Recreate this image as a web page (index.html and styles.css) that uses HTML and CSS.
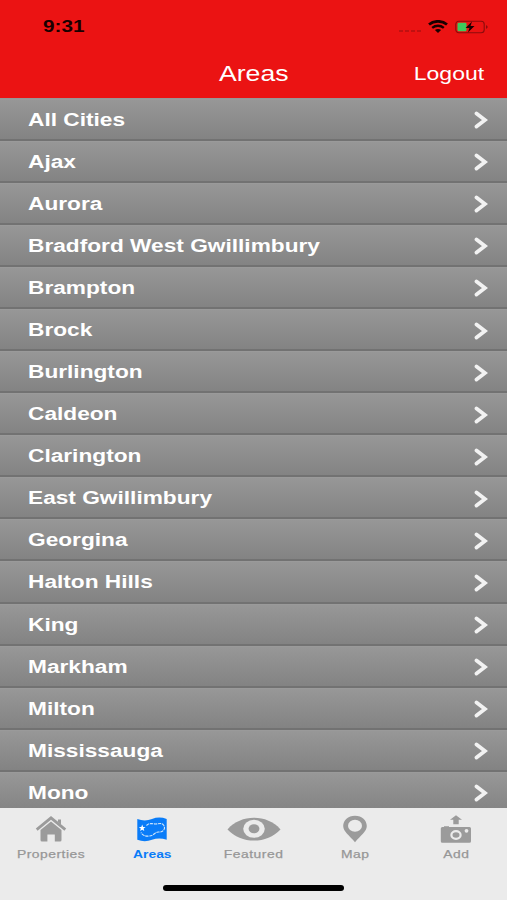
FILE: index.html
```html
<!DOCTYPE html>
<html lang="en">
<head>
  <meta charset="UTF-8">
  <meta name="viewport" content="width=device-width, initial-scale=1.0">
  <title>Areas</title>
  <link rel="stylesheet" href="styles.css">
</head>
<body>
  <header class="header">
    <div class="status-bar">
      <span class="status-time">9:31</span>
      <div class="status-icons">
        <svg class="signal" width="24" height="4" viewBox="0 0 24 4"><path d="M1 2h4M7 2h4M13 2h4M19 2h4"/></svg>
        <svg width="20" height="14" viewBox="0 0 20 14" fill="none" stroke="#180000">
          <path d="M1 4.6C6 .2 14 .2 19 4.6" stroke-width="2.7"/>
          <path d="M4.2 7.9c3.4-2.9 8.2-2.9 11.6 0" stroke-width="2.4"/>
          <path d="M6.9 10.1c1.8-1.5 4.4-1.5 6.2 0L10 13z" fill="#180000" stroke="none"/>
        </svg>
        <svg class="battery" width="34" height="14" viewBox="0 0 34 14">
          <rect x=".8" y="1.2" width="28.4" height="11.6" rx="3" fill="none" stroke="#8c0c0c" stroke-width="1.1"/>
          <path d="M31 5.2c2.2.6 2.2 3 0 3.6z" fill="#8c0c0c"/>
          <rect x="2.5" y="2.8" width="9" height="8.4" rx="1.2" fill="#3ccb5c"/>
          <path d="M17 1.5l-6.5 6.4h4l-1.6 4.6L19.5 6h-4z" fill="#180000"/>
        </svg>
      </div>
    </div>
    <div class="nav-bar">
      <h1 class="nav-title">Areas</h1>
      <a class="nav-logout">Logout</a>
    </div>
  </header>

  <ul id="areaList" class="area-list"></ul>

  <footer class="footer">
    <nav class="tab-bar">
      <a class="tab">
        <svg class="tab-icon" width="32" height="28" viewBox="0 0 32 28">
          <path d="M1.7 14.6L16 2.8l14.3 11.8" fill="none" stroke="#9b9b9b" stroke-width="2.8"/>
          <path d="M23 4.5h3V9.500l-3-2.500zM16 6.500L26.500 15V25q0 1.500-1.500 1.500h-5.200V19.500h-7.400v7H7q-1.500 0-1.500-1.500V15z"/>
        </svg>
        <span class="tab-label">Properties</span>
      </a>
      <a class="tab tab-active">
        <svg class="tab-icon" width="32" height="28" viewBox="0 0 32 28">
          <path d="M1.3 4q7.500 2.800 14.700 0t14.700 0v20.800q-7.500-2.800-14.700 0t-14.700 0z"/>
          <path d="M6.2 9.500l.9 2.400 2.500.1-2 1.600.7 2.500-2.100-1.400-2.100 1.400.7-2.500-2-1.600 2.500-.1z" fill="#fff"/>
          <path d="M10.500 10.500c3-3 6-1.500 9-1.500s6-1.500 8 1c3 4-1 7.500-5 7-3-.5-5 4-9 4-4 .5-7-.5-8.500-3.500" fill="none" stroke="#d5e8fb" stroke-width="1.100" stroke-dasharray="3.200 .8"/>
        </svg>
        <span class="tab-label">Areas</span>
      </a>
      <a class="tab">
        <svg class="tab-icon" width="54" height="28" viewBox="0 0 54 28">
          <path d="M.5 14.400C14-1 40-1 53.500 14.400 40 29.200 14 29.200.5 14.400z"/>
          <ellipse cx="27" cy="13.800" rx="10.800" ry="9" fill="#ebebeb"/>
          <ellipse cx="27" cy="13.800" rx="5.400" ry="4.500"/>
        </svg>
        <span class="tab-label">Featured</span>
      </a>
      <a class="tab">
        <svg class="tab-icon" width="26" height="28" viewBox="0 0 26 28">
          <path d="M13 .8C6 .8 1.200 5.300 1.200 11 1.200 16.500 7.500 20.500 13 27.300 18.500 20.500 24.800 16.500 24.800 11 24.800 5.300 20 .8 13 .8z"/>
          <ellipse cx="13" cy="10.800" rx="7" ry="6" fill="#ebebeb"/>
        </svg>
        <span class="tab-label">Map</span>
      </a>
      <a class="tab">
        <svg class="tab-icon" width="32" height="28" viewBox="0 0 32 28">
          <path d="M16 .3l6 4.500h-3.300v4.500h-5.400V4.800H10z"/>
          <path d="M2.300 12H4v-.8h5v.8h20.500q1.500 0 1.500 1.500v12.800q0 1.500-1.500 1.500H2.300q-1.500 0-1.500-1.500V13.500q0-1.500 1.500-1.500z"/>
          <ellipse cx="16" cy="20" rx="4.600" ry="3.800" fill="none" stroke="#ebebeb" stroke-width="2.200"/>
          <circle cx="26.500" cy="15.800" r="1.900" fill="#ebebeb"/>
        </svg>
        <span class="tab-label">Add</span>
      </a>
    </nav>
    <div class="home-indicator"></div>
  </footer>

  <script>
    var areas = [
      "All Cities", "Ajax", "Aurora", "Bradford West Gwillimbury", "Brampton", "Brock",
      "Burlington", "Caldeon", "Clarington", "East Gwillimbury", "Georgina", "Halton Hills",
      "King", "Markham", "Milton", "Mississauga", "Mono"
    ];

    var listHTML = "";
    for (var i = 0; i < areas.length; i++) {
      listHTML += '<li class="area-row">' +
        '<span class="area-name">' + areas[i] + '</span>' +
        '<svg class="chevron" width="14" height="18" viewBox="0 0 14 18"><path d="M2.5 2.5L11 9l-8.5 6.5"/></svg>' +
        '</li>';
    }
    document.getElementById("areaList").innerHTML = listHTML;
  </script>
</body>
</html>
```

FILE: styles.css
```css
* {
  box-sizing: border-box;
}

body {
  margin: 0;
  height: 900px;
  display: flex;
  flex-direction: column;
  overflow: hidden;
  background-color: #ebebeb;
  font-family: "Liberation Sans", Arial, sans-serif;
}

/* Header */
.header {
  flex: none;
  height: 98px;
  background-color: #eb1313;
}

.status-bar {
  height: 52px;
  padding: 1px 18px 0 43px;
  display: flex;
  align-items: center;
  justify-content: space-between;
}

.status-time {
  color: #180000;
  font-size: 17px;
  font-weight: bold;
  transform: scaleX(1.22);
  transform-origin: left;
}

.status-icons {
  display: flex;
  align-items: center;
}

.signal {
  margin: 8px 6px 0 0;
  fill: none;
  stroke: #c01010;
  stroke-width: 2;
}

.battery {
  margin-left: 7px;
}

.nav-bar {
  height: 43px;
  padding: 0 23px;
  display: grid;
  grid-template-columns: 1fr auto 1fr;
  align-items: center;
  color: #fff;
}

.nav-title {
  grid-column: 2;
  margin: 0;
  font-size: 22px;
  font-weight: normal;
  transform: scaleX(1.21);
}

.nav-logout {
  justify-self: end;
  font-size: 19px;
  transform: scaleX(1.21);
  transform-origin: right;
}

/* List */
.area-list {
  flex: 1;
  min-height: 0;
  margin: 0;
  padding: 0.6px 0 0;
  overflow: hidden;
  list-style: none;
  background-color: #979797;
}

.area-row {
  height: 42.08px;
  padding: 0 19px 0 28px;
  display: flex;
  align-items: center;
  justify-content: space-between;
  background: linear-gradient(#979797, #838383);
  border-top: 1px solid #9a9a9a;
  border-bottom: 2px solid #727272;
}

.area-name {
  margin-top: 2px;
  color: #fff;
  font-size: 18px;
  font-weight: bold;
  transform: scaleX(1.26);
  transform-origin: left;
}

.chevron {
  margin-top: 2px;
  fill: none;
  stroke: #f2f2f2;
  stroke-width: 3.8;
  stroke-linecap: round;
}

/* Tabs */
.footer {
  flex: none;
  height: 92px;
  background-color: #ebebeb;
}

.tab-bar {
  height: 77px;
  padding: 7px 0 0 0.5px;
  display: grid;
  grid-template-columns: repeat(5, 101.3px);
}

.tab {
  display: flex;
  flex-direction: column;
  align-items: center;
  color: #979797;
}

.tab-icon {
  fill: #9b9b9b;
}

.tab-label {
  margin-top: 4px;
  font-size: 11px;
  line-height: 14px;
  letter-spacing: 0.4px;
  -webkit-text-stroke: 0.25px;
  transform: scaleX(1.26);
}

.tab-active {
  color: #0a7cf8;
}

.tab-active .tab-icon {
  fill: #0a7cf8;
}

.tab-active .tab-label {
  font-weight: bold;
  letter-spacing: 0;
  -webkit-text-stroke: 0;
}

.home-indicator {
  width: 181px;
  height: 6px;
  margin: 0 auto;
  border-radius: 3px;
  background-color: #000;
}
```
